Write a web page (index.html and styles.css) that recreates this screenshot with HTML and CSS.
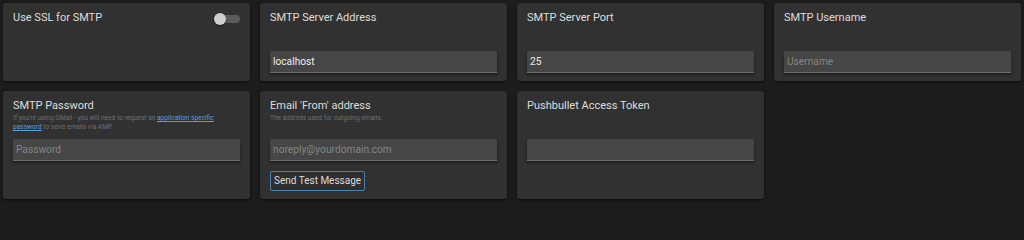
FILE: index.html
```html
<!DOCTYPE html>
<html>
<head>
<meta charset="utf-8">
<link rel="stylesheet" href="styles.css">
</head>
<body>
<div class="grid">
  <div class="card">
    <div class="head row">
      <div class="title">Use SSL for SMTP</div>
      <div class="switch"><span class="knob"></span></div>
    </div>
  </div>
  <div class="card">
    <div class="head"><div class="title">SMTP Server Address</div></div>
    <input class="field" type="text" value="localhost">
  </div>
  <div class="card">
    <div class="head"><div class="title">SMTP Server Port</div></div>
    <input class="field" type="text" value="25">
  </div>
  <div class="card">
    <div class="head"><div class="title">SMTP Username</div></div>
    <input class="field" type="text" placeholder="Username">
  </div>
  <div class="card">
    <div class="head">
      <div class="title">SMTP Password</div>
      <div class="desc">If you're using GMail - you will need to request an <a href="#">application specific</a><br><a href="#">password</a> to send emails via AMP.</div>
    </div>
    <input class="field" type="password" placeholder="Password">
  </div>
  <div class="card">
    <div class="head">
      <div class="title">Email 'From' address</div>
      <div class="desc">The address used for outgoing emails.</div>
    </div>
    <input class="field" type="text" placeholder="noreply@yourdomain.com">
    <div class="actions"><button class="btn">Send Test Message</button></div>
  </div>
  <div class="card">
    <div class="head"><div class="title">Pushbullet Access Token</div></div>
    <input class="field" type="text">
  </div>
</div>
</body>
</html>
```
FILE: styles.css
```css
html, body {
  margin: 0;
  background: #1c1c1c;
  font-family: Roboto, "Liberation Sans", sans-serif;
}
.grid {
  display: grid;
  grid-template-columns: repeat(4, 247px);
  column-gap: 10px;
  row-gap: 10px;
  padding: 3px;
}
.card {
  background: #313131;
  border-radius: 3px;
  box-shadow: 0 1px 3px rgba(0,0,0,0.6);
  padding: 8px 10px 8px;
  display: flex;
  flex-direction: column;
}
.head {
  height: 40px;
}
.head.row {
  display: flex;
  justify-content: space-between;
  align-items: flex-start;
}
.title {
  color: #dedede;
  font-size: 11px;
  line-height: 14px;
}
.desc {
  color: #707070;
  font-size: 6.6px;
  line-height: 9px;
  margin-top: 1px;
}
.desc a {
  color: #5b9fd6;
}
.field {
  box-sizing: border-box;
  width: 100%;
  height: 22px;
  margin: 0;
  border: 0;
  border-bottom: 1px solid #6a6a6a;
  border-radius: 2px 2px 0 0;
  background: #464646;
  box-shadow: 0 2px 3px rgba(0,0,0,0.45);
  color: #ececec;
  font-family: Roboto, "Liberation Sans", sans-serif;
  font-size: 10.2px;
  padding: 0 3px;
  outline: none;
}
.field::placeholder {
  color: #858585;
}
.actions {
  margin-top: 8px;
}
.btn {
  height: 20px;
  padding: 0 3px;
  background: #2e2e2e;
  border: 1px solid #4a82ad;
  border-radius: 2px;
  color: #dcdcdc;
  font-family: Roboto, "Liberation Sans", sans-serif;
  font-size: 10px;
}
.switch {
  position: relative;
  width: 20px;
  height: 8px;
  margin-top: 4px;
  background: #5a5a5a;
  border-radius: 4px;
}
.knob {
  position: absolute;
  left: -6px;
  top: -2px;
  width: 12px;
  height: 12px;
  border-radius: 50%;
  background: #cfcfcf;
  box-shadow: 0 1px 2px rgba(0,0,0,0.5);
}
```
